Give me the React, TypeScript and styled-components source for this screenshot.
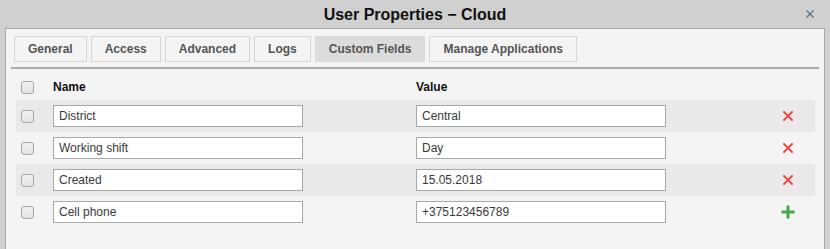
import React from "react";
import styled, { createGlobalStyle } from "styled-components";

const Global = createGlobalStyle`
  html, body { margin: 0; padding: 0; background: #d0d0d0; }
  body { font-family: "Liberation Sans", Arial, sans-serif; }
  * { box-sizing: border-box; }
`;

const Window = styled.div`
  width: 830px;
  height: 249px;
  background: #d0d0d0;
  display: flex;
  flex-direction: column;
  overflow: hidden;
`;

const TitleBar = styled.div`
  height: 28px;
  flex: 0 0 28px;
  display: flex;
  align-items: center;
  justify-content: center;
  position: relative;
`;

const Title = styled.div`
  font-size: 16px;
  font-weight: bold;
  color: #111;
  padding-top: 1px;
`;

const CloseBtn = styled.div`
  position: absolute;
  right: 16px;
  top: 10px;
  width: 8px;
  height: 8px;
  display: flex;
`;

const Panel = styled.div`
  margin: 0 5px 0 5px;
  flex: 1;
  background: #f4f4f4;
  border: 1px solid #a9a9a9;
  border-bottom: none;
  padding: 7px 5px 0 5px;
`;

const Tabs = styled.div`
  display: flex;
  gap: 4px;
  padding-left: 3px;
`;

const Tab = styled.div<{ $active?: boolean }>`
  height: 26px;
  padding: 0 13px;
  display: flex;
  align-items: center;
  font-size: 12px;
  font-weight: bold;
  color: #555;
  background: ${(p) => (p.$active ? "#dcdcdc" : "#f4f4f4")};
  border: 1px solid ${(p) => (p.$active ? "#dcdcdc" : "#d6d6d6")};
`;

const Divider = styled.div`
  margin-top: 5px;
  height: 2px;
  background: #ababab;
`;

const Table = styled.div`
  margin: 0 4px 0 5px;
  display: flex;
  flex-direction: column;
`;

const Row = styled.div<{ $shade?: boolean; $header?: boolean }>`
  display: grid;
  grid-template-columns: 37px 363px 346px 52px;
  align-items: center;
  height: ${(p) => (p.$header ? "31px" : "32px")};
  padding-top: ${(p) => (p.$header ? "5px" : "0")};
  background: ${(p) => (p.$shade ? "#e9e9e9" : "transparent")};
`;

const Check = styled.span`
  display: block;
  width: 13px;
  height: 13px;
  margin-left: 5px;
  border: 1px solid #a8a8a8;
  border-radius: 3px;
  background: linear-gradient(#f2f2f2, #e2e2e2);
`;

const HeadLabel = styled.div`
  font-size: 12px;
  font-weight: bold;
  color: #111;
`;

const Field = styled.input`
  width: 250px;
  height: 22px;
  border: 1px solid #a9a9a9;
  background: #fff;
  padding: 0 0 1px 5px;
  font-family: "Liberation Sans", Arial, sans-serif;
  font-size: 12px;
  color: #3a3a3a;
  outline: none;
`;

const Action = styled.div`
  display: flex;
  justify-content: center;
  align-items: center;
`;

const RemoveIcon = () => (
  <svg width="10" height="10" viewBox="0 0 10 10">
    <path d="M1 1 L9 9 M9 1 L1 9" stroke="#f0413c" strokeWidth="1.8" strokeLinecap="square" />
  </svg>
);

const AddIcon = () => (
  <svg width="14" height="14" viewBox="0 0 14 14">
    <path d="M7 0.5 V13.5 M0.5 7 H13.5" stroke="#43a94a" strokeWidth="3" />
  </svg>
);

const rows = [
  { name: "District", value: "Central" },
  { name: "Working shift", value: "Day" },
  { name: "Created", value: "15.05.2018" },
];

const tabs = ["General", "Access", "Advanced", "Logs", "Custom Fields", "Manage Applications"];

export default function App() {
  return (
    <>
      <Global />
      <Window>
        <TitleBar>
          <Title>User Properties − Cloud</Title>
          <CloseBtn>
            <svg width="8" height="8" viewBox="0 0 8 8">
              <path d="M0.5 0.5 L7.5 7.5 M7.5 0.5 L0.5 7.5" stroke="#55718f" strokeWidth="1.2" />
            </svg>
          </CloseBtn>
        </TitleBar>
        <Panel>
          <Tabs>
            {tabs.map((t) => (
              <Tab key={t} $active={t === "Custom Fields"}>
                {t}
              </Tab>
            ))}
          </Tabs>
          <Divider />
          <Table>
            <Row $header>
              <Check />
              <HeadLabel>Name</HeadLabel>
              <HeadLabel>Value</HeadLabel>
              <span />
            </Row>
            {rows.map((r, i) => (
              <Row key={r.name} $shade={i % 2 === 0}>
                <Check />
                <Field defaultValue={r.name} />
                <Field defaultValue={r.value} />
                <Action>
                  <RemoveIcon />
                </Action>
              </Row>
            ))}
            <Row>
              <Check />
              <Field defaultValue="Cell phone" />
              <Field defaultValue="+375123456789" />
              <Action>
                <AddIcon />
              </Action>
            </Row>
          </Table>
        </Panel>
      </Window>
    </>
  );
}
